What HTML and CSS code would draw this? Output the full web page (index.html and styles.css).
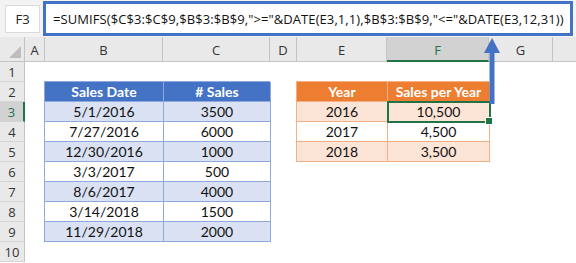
FILE: index.html
```html
<!DOCTYPE html>
<html>
<head>
<meta charset="utf-8">
<link rel="stylesheet" href="styles.css">
</head>
<body>
<div class="app">
  <div class="fbar">
    <div class="namebox">F3</div>
    <div class="formula">=SUMIFS($C$3:$C$9,$B$3:$B$9,"&gt;="&amp;DATE(E3,1,1),$B$3:$B$9,"&lt;="&amp;DATE(E3,12,31))</div>
  </div>
  <div class="sheet">
    <div class="corner"><span class="tri"></span></div>
    <div class="ch">A</div>
    <div class="ch">B</div>
    <div class="ch">C</div>
    <div class="ch">D</div>
    <div class="ch">E</div>
    <div class="ch ch-sel">F</div>
    <div class="ch">G</div>
    <div class="ch ch-last"></div>

    <div class="rh">1</div>
    <div class="rh">2</div>
    <div class="rh rh-sel">3</div>
    <div class="rh">4</div>
    <div class="rh">5</div>
    <div class="rh">6</div>
    <div class="rh">7</div>
    <div class="rh">8</div>
    <div class="rh">9</div>
    <div class="rh">10</div>

    <div class="tbl tbl-blue">
      <div class="hd">Sales Date</div><div class="hd"># Sales</div>
      <div class="alt">5/1/2016</div><div class="alt">3500</div>
      <div>7/27/2016</div><div>6000</div>
      <div class="alt">12/30/2016</div><div class="alt">1000</div>
      <div>3/3/2017</div><div>500</div>
      <div class="alt">8/6/2017</div><div class="alt">4000</div>
      <div>3/14/2018</div><div>1500</div>
      <div class="alt">11/29/2018</div><div class="alt">2000</div>
    </div>

    <div class="tbl tbl-orange">
      <div class="hd">Year</div><div class="hd">Sales per Year</div>
      <div class="alt">2016</div><div class="alt active">10,500</div>
      <div>2017</div><div>4,500</div>
      <div class="alt">2018</div><div class="alt">3,500</div>
    </div>
  </div>

  <svg class="arrow" width="20" height="68" viewBox="0 0 20 68">
    <rect x="7.5" y="14" width="5" height="54" fill="#4472C4"/>
    <polygon points="2,17 10,2 18,17" fill="#4472C4"/>
  </svg>
</div>
</body>
</html>
```
FILE: styles.css
```css
* { box-sizing: border-box; }
html, body { margin: 0; padding: 0; background: #fff; }
.app {
  position: relative;
  width: 576px;
  height: 263px;
  overflow: hidden;
  font-family: "Open Sans", "Liberation Sans", sans-serif;
}
.fbar {
  display: flex;
  height: 37px;
  background: #f3f3f3;
}
.namebox {
  width: 35px;
  margin: 5px 3px 4px 5px;
  background: #fff;
  border: 1px solid #dadada;
  display: flex;
  align-items: center;
  justify-content: center;
  font-size: 13px;
  color: #222;
}
.formula {
  flex: 1;
  margin: 1px 3px 1px 0;
  border: 3px solid #4472c4;
  background: #fff;
  display: flex;
  align-items: center;
  padding-left: 7px;
  font-size: 13px;
  letter-spacing: 0.08px;
  color: #111;
  white-space: nowrap;
  overflow: hidden;
}
.sheet {
  display: grid;
  grid-template-columns: 25px 20px 118px 107px 27px 90px 102px 64px 23px;
  grid-template-rows: 25px repeat(10, 20px);
}
.corner {
  position: relative;
  background: #e9e9e9;
  border-right: 1px solid #c4c4c4;
  border-bottom: 1px solid #c4c4c4;
}
.tri {
  position: absolute;
  right: 3px;
  bottom: 3px;
  width: 0;
  height: 0;
  border-left: 12px solid transparent;
  border-bottom: 12px solid #bdbdbd;
}
.ch {
  background: #e9e9e9;
  border-right: 1px solid #c4c4c4;
  border-bottom: 1px solid #c4c4c4;
  display: flex;
  align-items: center;
  justify-content: center;
  font-size: 13px;
  color: #333;
  padding-top: 2px;
}
.ch-last { border-right: none; }
.ch-sel {
  background: #d2d2d2;
  color: #217346;
  border-bottom: 2px solid #217346;
}
.rh {
  grid-column: 1;
  background: #e9e9e9;
  border-right: 1px solid #c4c4c4;
  border-bottom: 1px solid #d4d4d4;
  display: flex;
  align-items: center;
  justify-content: center;
  font-size: 13px;
  color: #333;
}
.rh-sel {
  background: #d2d2d2;
  color: #217346;
  border-right: 2px solid #217346;
}
.tbl {
  display: grid;
  grid-auto-rows: 20px;
  margin: -1px 0 0 -1px;
  font-family: "Lato", "Open Sans", sans-serif;
  font-size: 14px;
  color: #111;
}
.tbl > div {
  display: flex;
  align-items: center;
  justify-content: center;
  border-right: 1px solid;
  border-bottom: 1px solid;
  background: #fff;
}
.tbl > .hd { color: #fff; font-weight: bold; }
.tbl-blue {
  grid-column: 3 / 5;
  grid-row: 3 / 11;
  grid-template-columns: 119px 107px;
  border-left: 1px solid #8ea9db;
  border-top: 1px solid #8ea9db;
}
.tbl-blue > div { border-color: #8ea9db; }
.tbl-blue > .hd { background: #4472c4; }
.tbl-blue > .alt { background: #d9e1f2; }
.tbl-orange {
  grid-column: 6 / 8;
  grid-row: 3 / 7;
  grid-template-columns: 91px 102px;
  border-left: 1px solid #f4b084;
  border-top: 1px solid #f4b084;
}
.tbl-orange > div { border-color: #f4b084; }
.tbl-orange > .hd { background: #ed7d31; }
.tbl-orange > .alt { background: #fce4d6; }
.tbl > .active {
  position: relative;
  outline: 2px solid #217346;
  outline-offset: -1px;
}
.tbl > .active::after {
  content: "";
  position: absolute;
  right: -4px;
  bottom: -4px;
  width: 6px;
  height: 6px;
  background: #217346;
  border: 1px solid #fff;
}
.arrow {
  position: absolute;
  left: 482px;
  top: 36px;
}
```
